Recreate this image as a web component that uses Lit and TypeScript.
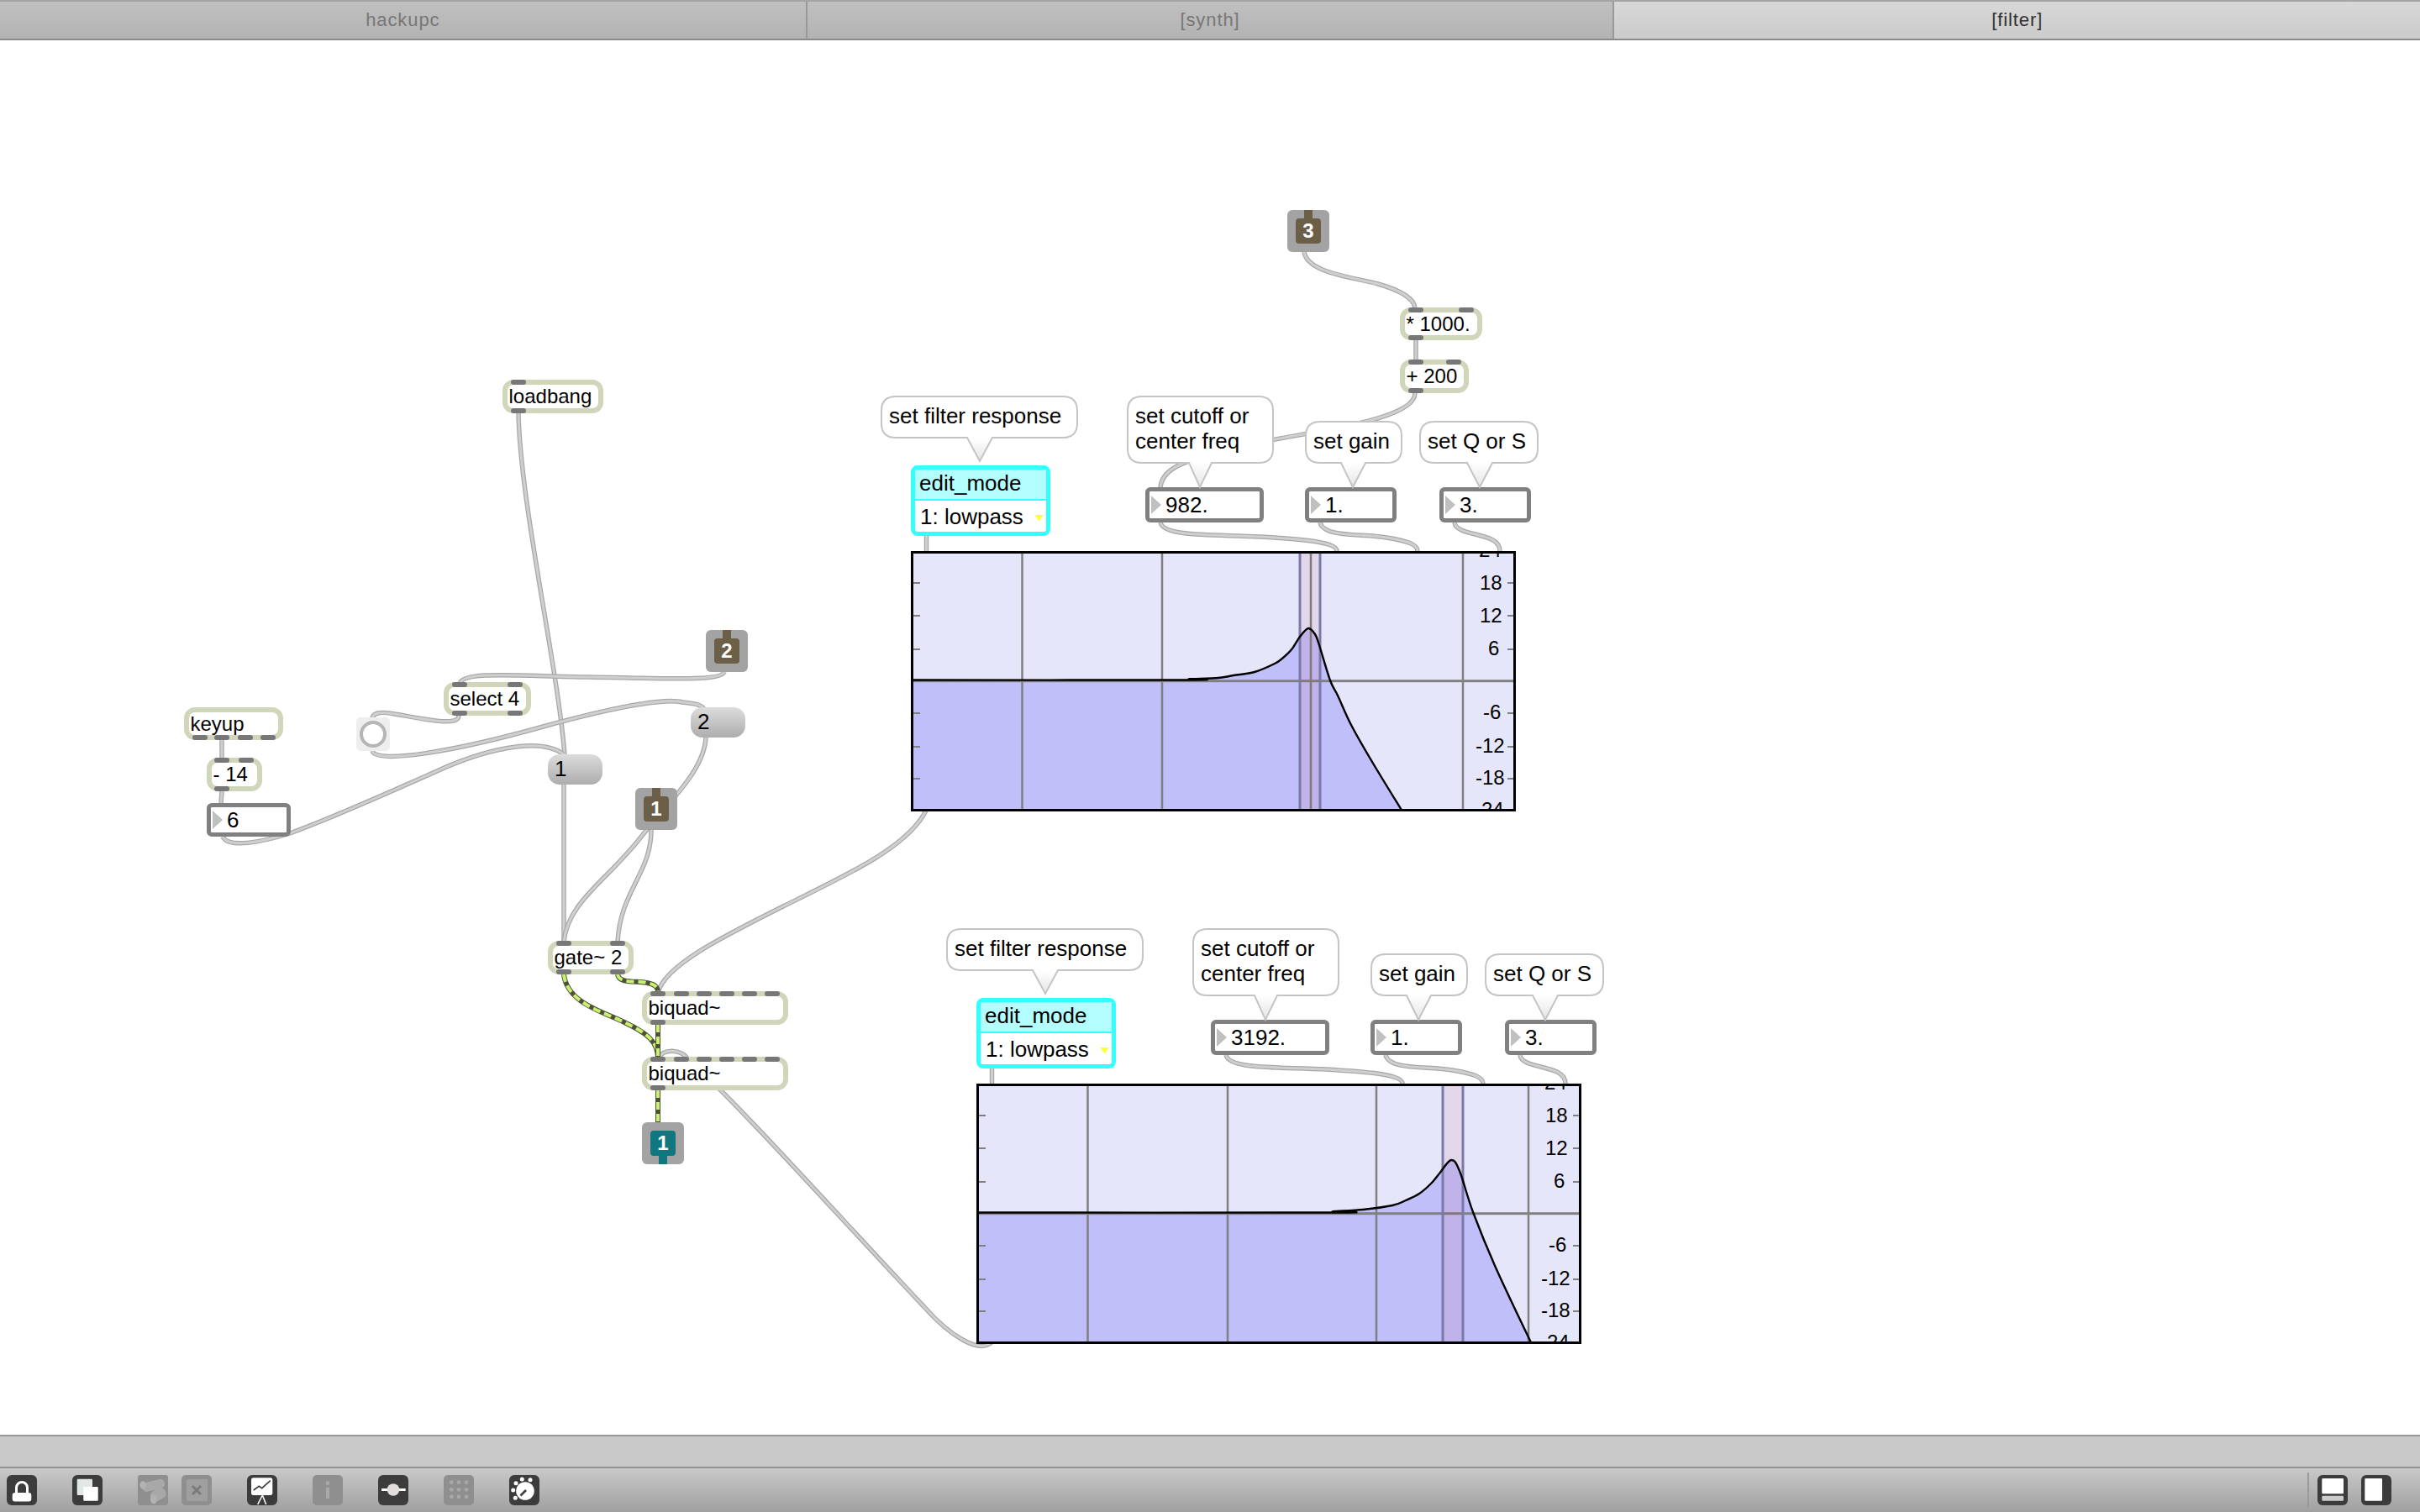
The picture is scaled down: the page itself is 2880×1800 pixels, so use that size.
import { LitElement, html, css, svg } from "lit";
import { customElement } from "lit/decorators.js";

const TOP = 48;

type Pt = [number, number];
function smooth(p: Pt[]): string {
  let d = `M${p[0][0]} ${p[0][1]}`;
  for (let i = 0; i < p.length - 1; i++) {
    const a = p[Math.max(0, i - 1)], b = p[i], c = p[i + 1], e = p[Math.min(p.length - 1, i + 2)];
    const c1x = b[0] + (c[0] - a[0]) / 6, c1y = b[1] + (c[1] - a[1]) / 6;
    const c2x = c[0] - (e[0] - b[0]) / 6, c2y = c[1] - (e[1] - b[1]) / 6;
    d += ` C${c1x.toFixed(1)} ${c1y.toFixed(1)} ${c2x.toFixed(1)} ${c2y.toFixed(1)} ${c[0]} ${c[1]}`;
  }
  return d;
}

const shift = (d: string, dx: number, dy: number) => {
  let i = 0;
  return d.replace(/-?\d+(\.\d+)?/g, (m) => String(Number(m) + (i++ % 2 === 0 ? dx : dy)));
};

const G1 = "M1381 622 C1385 640 1450 636 1500 639 C1550 642 1591 645 1591 656";
const G2 = "M1571 622 C1575 640 1620 635 1650 640 C1675 644 1687 648 1687 656";
const G3 = "M1731 622 C1733 640 1785 632 1785 656";
const G4 = "M1102.5 638 L1102.5 656";

const cords: string[] = [
  "M1552 300 C1556 325 1610 330 1640 338 C1665 345 1682 355 1684 366",
  "M1685 405 L1685 428",
  "M1684 468 C1684 505 1530 515 1450 538 C1405 550 1381 560 1381 582",
  G1, G2, G3, G4,
  shift(G1, 78, 634), shift(G2, 78, 634), shift(G3, 78, 634), shift(G4, 78, 634),
  "M1102 965 C1080 1010 1000 1045 930 1080 C860 1115 790 1150 783 1182",
  "M783 1260 C790 1248 810 1248 820 1262 C870 1305 1000 1450 1100 1556 C1130 1590 1165 1612 1180 1598",
  "M617 492 C619 600 665 800 672 900",
  "M671 934 L671 1122",
  "M862 800 C858 812 780 807 700 806 C620 805 550 798 547 814",
  "M546 852 C546 866 500 855 470 850 C450 846 443 850 443 856",
  "M443 894 C448 910 540 895 650 864 C720 845 790 830 812 836 C826 838 834 838 838 844",
  "M265 996 C272 1010 310 1003 345 992 C400 972 470 940 520 918 C570 895 640 875 671 898",
  "M264 881 L264 902",
  "M264 942 L263 956",
  "M840 878 C838 920 790 960 760 1000 C720 1050 675 1075 671 1122",
  "M775 988 C775 1040 738 1060 735 1122",
];

const signals: string[] = [
  "M671 1160 C675 1195 720 1205 745 1218 C770 1230 783 1240 783 1260",
  "M735 1160 C737 1172 760 1167 770 1170 C780 1172 783 1175 783 1182",
  "M783 1220 L783 1258",
  "M783 1298 L783 1336",
];

interface Obj { t: string; x: number; y: number; w: number; h?: number; ins: number[]; outs: number[]; }
const objs: Obj[] = [
  { t: "loadbang", x: 598, y: 452, w: 120, ins: [10], outs: [10] },
  { t: "keyup", x: 219, y: 842, w: 118, h: 39, ins: [], outs: [10, 36, 64, 91] },
  { t: "- 14", x: 246, y: 902, w: 66, ins: [9, 38], outs: [9] },
  { t: "select 4", x: 528, y: 812, w: 104, ins: [10, 76], outs: [10, 76] },
  { t: "gate~ 2", x: 652, y: 1120, w: 102, ins: [10, 74], outs: [10, 74] },
  { t: "biquad~", x: 764, y: 1180, w: 174, ins: [10, 38, 65, 92, 119, 146], outs: [10] },
  { t: "biquad~", x: 764, y: 1258, w: 174, ins: [10, 38, 65, 92, 119, 146], outs: [10] },
  { t: "* 1000.", x: 1666, y: 366, w: 98, h: 39, ins: [10, 70], outs: [10] },
  { t: "+ 200", x: 1666, y: 428, w: 82, ins: [10, 55], outs: [10] },
];

const numbers = [
  { t: "6", x: 246, y: 956, w: 100, h: 40 },
  { t: "982.", x: 1363, y: 580, w: 141, h: 42 },
  { t: "1.", x: 1553, y: 580, w: 109, h: 42 },
  { t: "3.", x: 1713, y: 580, w: 109, h: 42 },
  { t: "3192.", x: 1441, y: 1214, w: 141, h: 42 },
  { t: "1.", x: 1631, y: 1214, w: 109, h: 42 },
  { t: "3.", x: 1791, y: 1214, w: 109, h: 42 },
];

const inlets = [
  { n: "3", x: 1532, y: 250, out: false },
  { n: "2", x: 840, y: 750, out: false },
  { n: "1", x: 756, y: 938, out: false },
  { n: "1", x: 764, y: 1336, out: true },
];

const messages = [
  { t: "2", x: 822, y: 842 },
  { t: "1", x: 652, y: 898 },
];

interface Bub { lines: string[]; x: number; y: number; w: number; h: number; l: number; r: number; tx: number; ty: number; }
const bub0: Bub[] = [
  { lines: ["set filter response"], x: 1049, y: 472, w: 233, h: 49, l: 1151, r: 1181, tx: 1166, ty: 549 },
  { lines: ["set cutoff or", "center freq"], x: 1342, y: 472, w: 173, h: 79, l: 1415, r: 1442, tx: 1428, ty: 580 },
  { lines: ["set gain"], x: 1554, y: 502, w: 114, h: 49, l: 1596, r: 1625, tx: 1610, ty: 580 },
  { lines: ["set Q or S"], x: 1690, y: 502, w: 140, h: 49, l: 1746, r: 1776, tx: 1761, ty: 580 },
];
const bubbles: Bub[] = [
  ...bub0,
  ...bub0.map((b) => ({ ...b, x: b.x + 78, y: b.y + 634, l: b.l + 78, r: b.r + 78, tx: b.tx + 78, ty: b.ty + 634 })),
];

const bubblePath = (b: Bub) => {
  const r = 17, X = 1, Y = 1, R = b.w + 1, B = b.h + 1;
  const l = b.l - b.x + 1, e = b.r - b.x + 1, tx = b.tx - b.x + 1, ty = b.ty - b.y + 1;
  return `M${X + r} ${Y} H${R - r} Q${R} ${Y} ${R} ${Y + r} V${B - r} Q${R} ${B} ${R - r} ${B} H${e} L${tx} ${ty} L${l} ${B} H${X + r} Q${X} ${B} ${X} ${B - r} V${Y + r} Q${X} ${Y} ${X + r} ${Y} Z`;
};

const menus = [{ x: 1084, y: 554 }, { x: 1162, y: 1188 }];

const curve1: Pt[] = [[0, 153.5], [328, 153.5], [330, 152.3], [365, 151], [383, 148], [408, 144], [432, 134], [442, 127], [453, 116], [462, 102], [472, 92], [480, 99], [485, 112], [498, 154], [507, 172], [523, 207], [548, 251], [584, 310]];
const curve2: Pt[] = [[0, 153.5], [421, 153.5], [423, 152.3], [459, 150], [494, 145], [510, 139], [526, 131], [540, 119], [550, 107], [564, 91], [574, 104], [590, 153], [617, 219], [657, 304], [661, 310]];

const graphs = [
  { x: 1084, y: 656, c: curve1, band: [462, 486] },
  { x: 1162, y: 1290, c: curve2, band: [554, 578] },
];

const labels: [string, number, number][] = [
  ["24", 675, 7], ["18", 676, 46], ["12", 676, 85], ["6", 686, 124],
  ["-6", 680, 200], ["-12", 671, 240], ["-18", 671, 278], ["24", 678, 316],
];
const ticks = [38, 77, 117, 193, 233, 271];

@customElement("filter-graph")
export class FilterGraph extends LitElement {
  static properties = { curve: { attribute: false }, band: { attribute: false } };
  curve: Pt[] = [];
  band: number[] = [0, 0];
  static styles = css`
    :host { display: block; width: 100%; height: 100%; }
    svg { display: block; width: 100%; height: 100%; overflow: hidden; }
    text { font: 24px "Liberation Sans", Arial, sans-serif; fill: #000; }
  `;
  render() {
    const line = smooth(this.curve);
    const last = this.curve[this.curve.length - 1][0];
    const [a, b] = this.band;
    return html`<svg viewBox="0 0 714 304">
      <rect width="714" height="304" fill="#e6e6fb"></rect>
      <g transform="translate(-2 -3)">
        <path d="${line} L${last} 320 L0 320 Z" fill="#c0bffa"></path>
        ${[131.5, 298, 475, 656].map((x) => svg`<rect x=${x - 1.25} y="0" width="2.5" height="320" fill="#808080"></rect>`)}
        <rect x="0" y="153.2" width="730" height="3" fill="#808080"></rect>
        <rect x=${a} y="0" width=${b - a} height="320" fill="rgba(180,43,38,.08)"></rect>
        <rect x=${a - 1.5} y="0" width="3" height="320" fill="#7a7aa8"></rect>
        <rect x=${b - 1.5} y="0" width="3" height="320" fill="#7a7aa8"></rect>
        <path d=${line} fill="none" stroke="#000" stroke-width="2.4"></path>
        ${ticks.map((y) => svg`
          <rect x="0" y=${y - 1} width="10" height="2" fill="#808080"></rect>
          <rect x="709" y=${y - 1} width="9" height="2" fill="#808080"></rect>`)}
        ${labels.map(([t, x, y]) => svg`<text x=${x} y=${y}>${t}</text>`)}
      </g>
    </svg>`;
  }
}

const lockIcon = svg`<rect x="0" y="0" width="36" height="36" rx="6" fill="#3c3c3c"></rect>
  <path d="M11.5 23 V15 A6.5 6.5 0 0 1 24.5 15 V23" fill="none" stroke="#fff" stroke-width="3"></path>
  <rect x="6.7" y="21" width="22.6" height="10.5" rx="3" fill="#fff"></rect>`;
const pagesIcon = svg`<rect width="36" height="36" rx="6" fill="#3c3c3c"></rect>
  <rect x="5.7" y="4.7" width="18.3" height="19.3" rx="1" fill="#e2e8e6"></rect>
  <rect x="13.3" y="14" width="17.4" height="16.7" rx="1" fill="#fff"></rect>`;
const binocIcon = svg`<rect width="36" height="36" rx="3" fill="#8f8f8f"></rect>
  <g fill="#a8a8a8">
    <rect x="5" y="7" width="27" height="11" rx="5" transform="rotate(-14 18 12)"></rect>
    <rect x="15" y="17" width="19" height="13" rx="6" transform="rotate(-28 24 24)"></rect>
  </g>
  <ellipse cx="6" cy="12" rx="3.5" ry="4.8" fill="#b2b2b2"></ellipse>
  <ellipse cx="19" cy="29" rx="4" ry="5.2" fill="#b2b2b2"></ellipse>`;
const closeIcon = svg`<rect width="36" height="36" rx="5" fill="#8f8f8f"></rect>
  <rect x="6" y="5" width="25" height="26" rx="2" fill="#9f9f9f"></rect>
  <path d="M13 13 L23 23 M23 13 L13 23" stroke="#7a7a7a" stroke-width="3"></path>`;
const chartIcon = svg`<rect width="36" height="36" rx="6" fill="#3c3c3c"></rect>
  <rect x="5" y="3.3" width="25.3" height="20.7" rx="2.5" fill="#fff"></rect>
  <path d="M7.7 18 L14.3 13.3 L17.7 15.7 L27.7 6.7" fill="none" stroke="#3c3c3c" stroke-width="1.6"></path>
  <path d="M18.3 24 L12.7 35 M18.3 24 L22.7 35" fill="none" stroke="#fff" stroke-width="1.6"></path>`;
const infoIcon = svg`<rect width="36" height="36" rx="5" fill="#8f8f8f"></rect>
  <rect x="16" y="7.3" width="4" height="4.4" fill="#a9a9a9"></rect>
  <rect x="16" y="14.7" width="4" height="13.3" fill="#a9a9a9"></rect>`;
const sliderIcon = svg`<rect width="36" height="36" rx="6" fill="#3c3c3c"></rect>
  <rect x="4" y="16" width="28.7" height="3" fill="#fff"></rect>
  <circle cx="18" cy="17.5" r="7.3" fill="#e2dcdc"></circle>`;
const gridDots: Pt[] = [9.3, 18, 27].flatMap((x) => [8.7, 17.3, 26].map((y) => [x, y] as Pt));
const gridIcon = svg`<rect width="36" height="36" rx="5" fill="#8f8f8f"></rect>
  ${gridDots.map(([x, y]) => svg`<circle cx=${x} cy=${y} r="2.4" fill="#a8a8a8"></circle>`)}`;
const knobDots: Pt[] = [[15.3, 5], [25, 5.7], [8, 9.7], [4.7, 18], [7.3, 27.3]];
const knobIcon = svg`<rect width="36" height="36" rx="6" fill="#3c3c3c"></rect>
  <circle cx="19" cy="19" r="10.8" fill="#fff"></circle>
  ${knobDots.map(([x, y]) => svg`<circle cx=${x} cy=${y} r="2.5" fill="#fff"></circle>`)}
  <path d="M13.5 24.5 L20 18" stroke="#3c3c3c" stroke-width="2.6"></path>`;
const panelBottom = svg`<rect width="36" height="36" rx="6" fill="#3c3c3c"></rect>
  <rect x="5.3" y="4" width="25.7" height="18.3" rx="1" fill="#fff"></rect>
  <rect x="5.3" y="24.7" width="25.7" height="6" rx="1" fill="#ccc"></rect>`;
const panelRight = svg`<rect width="36" height="36" rx="6" fill="#3c3c3c"></rect>
  <rect x="4.3" y="4" width="20.7" height="26.7" rx="1" fill="#fff"></rect>`;

const leftIcons = [
  { i: lockIcon, cls: "g42" }, { i: pagesIcon, cls: "g42" }, { i: binocIcon, cls: "g16" },
  { i: closeIcon, cls: "g42" }, { i: chartIcon, cls: "g42" }, { i: infoIcon, cls: "g42" },
  { i: sliderIcon, cls: "g42" }, { i: gridIcon, cls: "g42" }, { i: knobIcon, cls: "" },
];

@customElement("app-root")
export class AppRoot extends LitElement {
  static styles = css`
    :host {
      display: flex; flex-direction: column; width: 2880px; height: 1800px;
      background: #fff; overflow: hidden;
      font: 24px "Liberation Sans", Arial, sans-serif; color: #000;
    }
    .tabs { display: flex; height: 48px; flex: none; box-sizing: border-box; border-top: 2px solid #a4a4a4; border-bottom: 2px solid #8a8a8a; }
    .tab {
      flex: 1; display: flex; align-items: center; justify-content: center;
      background: linear-gradient(#c1c0c1, #b3b2b3); color: #777;
      font-size: 22px; letter-spacing: .9px; border-right: 2px solid #999;
    }
    .tab:last-child { border-right: 0; }
    .tab.active { background: linear-gradient(#d9d8d9, #cccbcc); color: #333; }

    .canvas { position: relative; flex: 1; min-height: 0; background: #fff; overflow: hidden; }
    .cords { position: absolute; left: 0; top: 0; }
    .node { position: absolute; box-sizing: border-box; white-space: nowrap; }

    .obj { height: 40px; border: 6px solid #cfd6b9; border-radius: 13px; background: #fff; line-height: 27px; padding-left: 1.5px; }
    .port { position: absolute; width: 18px; height: 6px; border-radius: 3px; background: #777; }
    .port.in { top: -6px; }
    .port.out { bottom: -6px; }

    .num { border: 5px solid #808080; border-radius: 6px; background: #fff; display: flex; align-items: center; padding-left: 2px; gap: 5px; font-size: 26px; }
    .tri { width: 12px; height: 22px; background: #c0c0c0; clip-path: polygon(0 0, 100% 50%, 0 100%); flex: none; }

    .inlet { width: 50px; height: 50px; border-radius: 6px; background: #a3a3a3; padding: 10px; }
    .core { width: 30px; height: 30px; border-radius: 4px; background: #6b5f47; color: #fff; font-weight: bold; display: flex; align-items: center; justify-content: center; }
    .stem { position: absolute; left: 20px; width: 10px; height: 10px; background: #6b5f47; top: 0; }
    .inlet.out .core, .inlet.out .stem { background: #11777f; }
    .inlet.out .stem { top: auto; bottom: 0; }

    .msg { width: 65px; height: 36px; border-radius: 14px; background: linear-gradient(#dcdcdc, #adadad); padding-left: 8px; line-height: 34px; font-size: 26px; }

    .toggle { width: 40px; height: 40px; border-radius: 5px; background: #eeeeee; display: flex; align-items: center; justify-content: center; }
    .ring { width: 32px; height: 32px; box-sizing: border-box; border: 4px solid #b5b5b5; border-radius: 50%; background: #fff; }

    .bubble svg { position: absolute; left: -1px; top: -1px; overflow: visible; }
    .bubble .txt { position: relative; padding: 8px 0 0 9px; line-height: 30px; font-size: 26px; }

    .menu { width: 166px; height: 84px; border: 5px solid #33ffff; border-radius: 8px; background: #fff; display: flex; flex-direction: column; font-size: 26px; }
    .menu .head { height: 37px; flex: none; box-sizing: border-box; background: #b3ffff; border-bottom: 2px solid #33ffff; padding-left: 5px; line-height: 33px; }
    .menu .item { flex: 1; display: flex; align-items: center; justify-content: space-between; padding: 2px 3px 0 6px; }
    .arrow { width: 11px; height: 8px; background: #ffff33; clip-path: polygon(0 0, 100% 0, 50% 100%); margin-top: 2px; }

    .graph { width: 720px; height: 310px; border: 3px solid #000; }

    .status { flex: none; height: 40px; box-sizing: border-box; background: #c9c9c9; border-top: 2px solid #999; border-bottom: 2px solid #919191; box-shadow: 0 -1px 0 #bbb; }
    .toolbar { flex: none; height: 52px; box-sizing: border-box; padding: 8px 34px 8px 8px; background: linear-gradient(#c9c9c9, #a0a0a0); display: flex; align-items: flex-start; justify-content: space-between; }
    .group { display: flex; align-items: flex-start; }
    .icon { width: 36px; height: 36px; display: block; flex: none; }
    .g42 { margin-right: 42px; }
    .g16 { margin-right: 16px; }
    .sep { width: 2px; height: 42px; background: #999; margin: -3px 10px 0 0; }
    .g16r { margin-right: 16px; }
  `;

  private cordSvg() {
    return html`<svg class="cords" width="2880" height="1660" viewBox="0 ${TOP} 2880 1660" fill="none" stroke-linecap="butt">
      ${cords.map((d) => svg`<path d=${d} stroke="#a8a8a8" stroke-width="5.5"></path><path d=${d} stroke="#cfcfcf" stroke-width="3"></path>`)}
      ${signals.map((d) => svg`<path d=${d} stroke="#4d513a" stroke-width="6"></path><path d=${d} stroke="#c9f06e" stroke-width="4" stroke-dasharray="9 5"></path>`)}
    </svg>`;
  }

  private pos(x: number, y: number, w?: number, h?: number) {
    return `left:${x}px;top:${y - TOP}px;` + (w ? `width:${w}px;` : "") + (h ? `height:${h}px;` : "");
  }

  render() {
    return html`
      <div class="tabs">
        <div class="tab">hackupc</div>
        <div class="tab">[synth]</div>
        <div class="tab active">[filter]</div>
      </div>
      <div class="canvas">
        ${this.cordSvg()}
        ${objs.map((o) => html`<div class="node obj" style=${this.pos(o.x, o.y, o.w, o.h)}>
          ${o.t}
          ${o.ins.map((p) => html`<span class="port in" style="left:${p - 6}px"></span>`)}
          ${o.outs.map((p) => html`<span class="port out" style="left:${p - 6}px"></span>`)}
        </div>`)}
        ${numbers.map((n) => html`<div class="node num" style=${this.pos(n.x, n.y, n.w, n.h)}><span class="tri"></span><span>${n.t}</span></div>`)}
        ${inlets.map((n) => html`<div class="node inlet ${n.out ? "out" : ""}" style=${this.pos(n.x, n.y)}><div class="core">${n.n}</div><div class="stem"></div></div>`)}
        ${messages.map((m) => html`<div class="node msg" style=${this.pos(m.x, m.y)}>${m.t}</div>`)}
        <div class="node toggle" style=${this.pos(424, 854)}><div class="ring"></div></div>
        ${graphs.map((g) => html`<div class="node graph" style=${this.pos(g.x, g.y)}><filter-graph .curve=${g.c} .band=${g.band}></filter-graph></div>`)}
        ${menus.map((m) => html`<div class="node menu" style=${this.pos(m.x, m.y)}>
          <div class="head">edit_mode</div>
          <div class="item"><span>1: lowpass</span><span class="arrow"></span></div>
        </div>`)}
        ${bubbles.map((b, i) => html`<div class="node bubble" style=${this.pos(b.x, b.y, b.w, b.h)}>
          <svg width=${b.w + 2} height=${b.ty - b.y + 2}>
            <defs><linearGradient id="bg${i}" x1="0" y1="0" x2="0" y2="1">
              <stop offset="0" stop-color="#fff"></stop>
              <stop offset=${(b.h / (b.ty - b.y)).toFixed(2)} stop-color="#fff"></stop>
              <stop offset="1" stop-color="#e4e4e4"></stop>
            </linearGradient></defs>
            <path d=${bubblePath(b)} fill="url(#bg${i})" stroke="#c4c4c4" stroke-width="2"></path>
          </svg>
          <div class="txt">${b.lines.map((l) => html`<div>${l}</div>`)}</div>
        </div>`)}
      </div>
      <div class="status"></div>
      <div class="toolbar">
        <div class="group">
          ${leftIcons.map((ic) => html`<svg class="icon ${ic.cls}" viewBox="0 0 36 36">${ic.i}</svg>`)}
        </div>
        <div class="group">
          <div class="sep"></div>
          <svg class="icon g16r" viewBox="0 0 36 36">${panelBottom}</svg>
          <svg class="icon" viewBox="0 0 36 36">${panelRight}</svg>
        </div>
      </div>
    `;
  }
}
